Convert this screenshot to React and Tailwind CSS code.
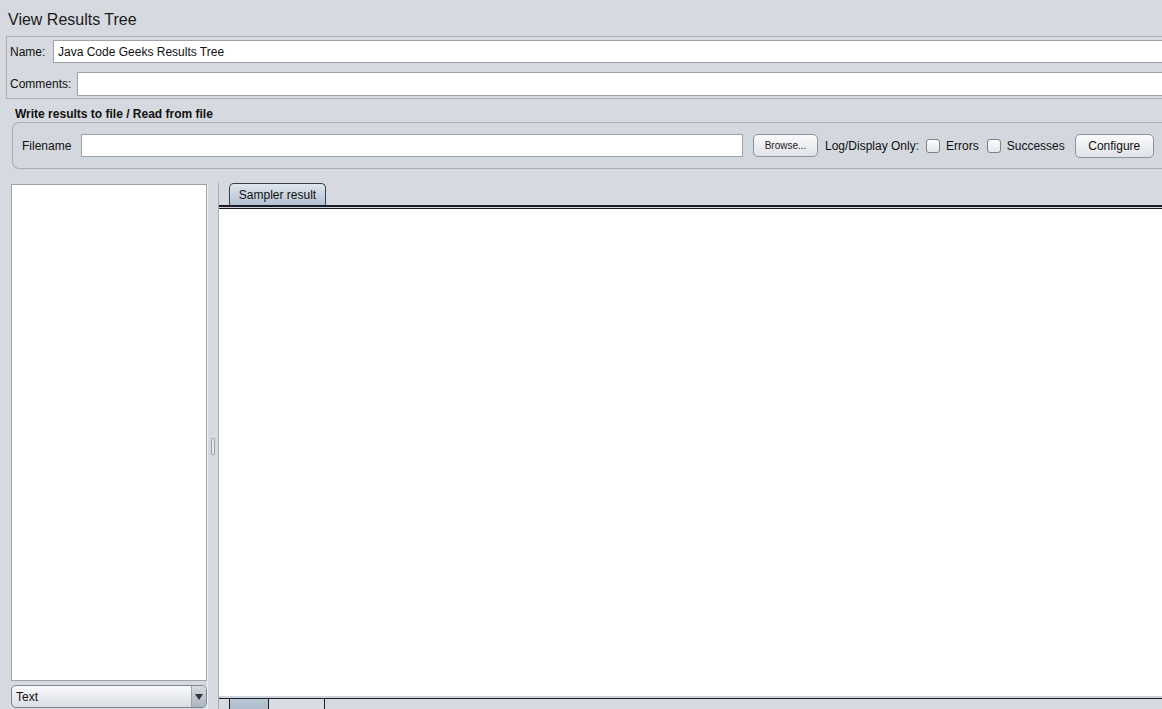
import React from "react";

export default function App() {
  return (
    <div
      className="w-[1162px] h-[709px] overflow-hidden bg-[#d6d9df] text-[12px] text-[#111] flex flex-col"
      style={{ fontFamily: '"Liberation Sans", Arial, sans-serif' }}
    >
      {/* Title */}
      <div className="h-[36px] pl-[8px] pt-[10px] text-[16px] leading-[20px] text-[#1a1a1a]">
        View Results Tree
      </div>

      {/* Name / Comments panel */}
      <div className="ml-[6px] h-[63px] border border-r-0 border-[#a9adb5] flex flex-col pt-[3px]">
        <div className="flex items-center h-[23px]">
          <span className="pl-[3px] w-[46px]">Name:</span>
          <div className="flex-1 h-[23px] border border-r-0 border-[#9ea3ab] bg-white flex items-center pl-[4px]">
            Java Code Geeks Results Tree
          </div>
        </div>
        <div className="flex items-center h-[24px] mt-[9px]">
          <span className="pl-[3px] w-[70px]">Comments:</span>
          <div className="flex-1 h-[24px] border border-r-0 border-[#9ea3ab] bg-white" />
        </div>
      </div>

      {/* Write results section */}
      <div className="h-[23px] pl-[15px] pt-[8px] font-bold leading-[14px]">
        Write results to file / Read from file
      </div>
      <div className="ml-[12px] h-[47px] border border-r-0 border-[#a8acb4] rounded-l-[7px] bg-[#d3d7de] flex items-center pr-[7px]">
        <span className="pl-[9px] w-[68px]">Filename</span>
        <div className="w-[662px] h-[23px] border border-[#9ea3ab] bg-white" />
        <button className="ml-[10px] w-[65px] h-[23px] rounded-[5px] border border-[#8d939d] bg-gradient-to-b from-[#fbfbfc] to-[#dfe2e7] text-[10px] text-[#222] flex items-center justify-center">
          Browse...
        </button>
        <span className="ml-[7px]">Log/Display Only:</span>
        <div className="ml-[7px] w-[14px] h-[14px] rounded-[3px] border border-[#7d838d] bg-gradient-to-b from-[#fdfdfd] to-[#e2e5ea]" />
        <span className="ml-[6px]">Errors</span>
        <div className="ml-[8px] w-[14px] h-[14px] rounded-[3px] border border-[#7d838d] bg-gradient-to-b from-[#fdfdfd] to-[#e2e5ea]" />
        <span className="ml-[6px]">Successes</span>
        <button className="ml-[10px] w-[79px] h-[24px] rounded-[5px] border border-[#8d939d] bg-gradient-to-b from-[#fbfbfc] to-[#dfe2e7] text-[12px] text-[#111] flex items-center justify-center">
          Configure
        </button>
      </div>

      {/* Split pane */}
      <div className="flex-1 flex mt-[14px] min-h-0">
        {/* Left */}
        <div className="w-[207px] pl-[11px] flex flex-col pt-[1px]">
          <div className="flex-1 bg-white border border-[#9ea3ab]" />
          <div className="mt-[4px] mb-[1px] h-[23px] rounded-[5px] border border-[#7f858f] bg-gradient-to-b from-[#fafbfc] to-[#d9dde3] flex items-center overflow-hidden">
            <span className="flex-1 pl-[4px]">Text</span>
            <div className="w-[15px] h-full border-l border-[#9ea3ab] bg-gradient-to-b from-[#d5dbe3] to-[#aab4c0] flex items-center justify-center">
              <svg width="8" height="6" viewBox="0 0 8 6">
                <path d="M0 0 L8 0 L4 6 Z" fill="#333" />
              </svg>
            </div>
          </div>
        </div>

        {/* Divider */}
        <div className="w-[12px] flex items-center justify-center border-l border-[#eef0f3] border-r border-r-[#a7acb4]">
          <div className="w-[4px] h-[17px] border border-[#9ea3ab] bg-[#e4e7ec] rounded-[1px]" />
        </div>

        {/* Right */}
        <div className="flex-1 flex flex-col pt-[2px]">
          <div className="h-[22px] flex items-end pl-[10px] border-b-[2px] border-[#1a1d26]">
            <div className="h-[22px] w-[97px] rounded-t-[5px] border border-b-0 border-[#3a3f4a] bg-gradient-to-b from-[#dfe6ee] to-[#b2c2d2] flex items-center justify-center">
              Sampler result
            </div>
          </div>
          <div className="h-[2px] bg-[#cdd4de] border-b border-[#1a1d26]" />
          <div className="flex-1 bg-white" />
          <div className="h-[2px] bg-[#cdd4de]" />
          <div className="h-[11px] border-t border-[#1a1d26] flex items-start">
            <div className="w-[11px] h-full border-r border-[#1a1d26]" />
            <div className="w-[38px] h-full bg-gradient-to-b from-[#b9c7d5] to-[#aebccb]" />
            <div className="w-[57px] h-full border-l border-r border-[#1a1d26] bg-[#d9dde3]" />
            <div className="flex-1" />
          </div>
        </div>
      </div>
    </div>
  );
}
